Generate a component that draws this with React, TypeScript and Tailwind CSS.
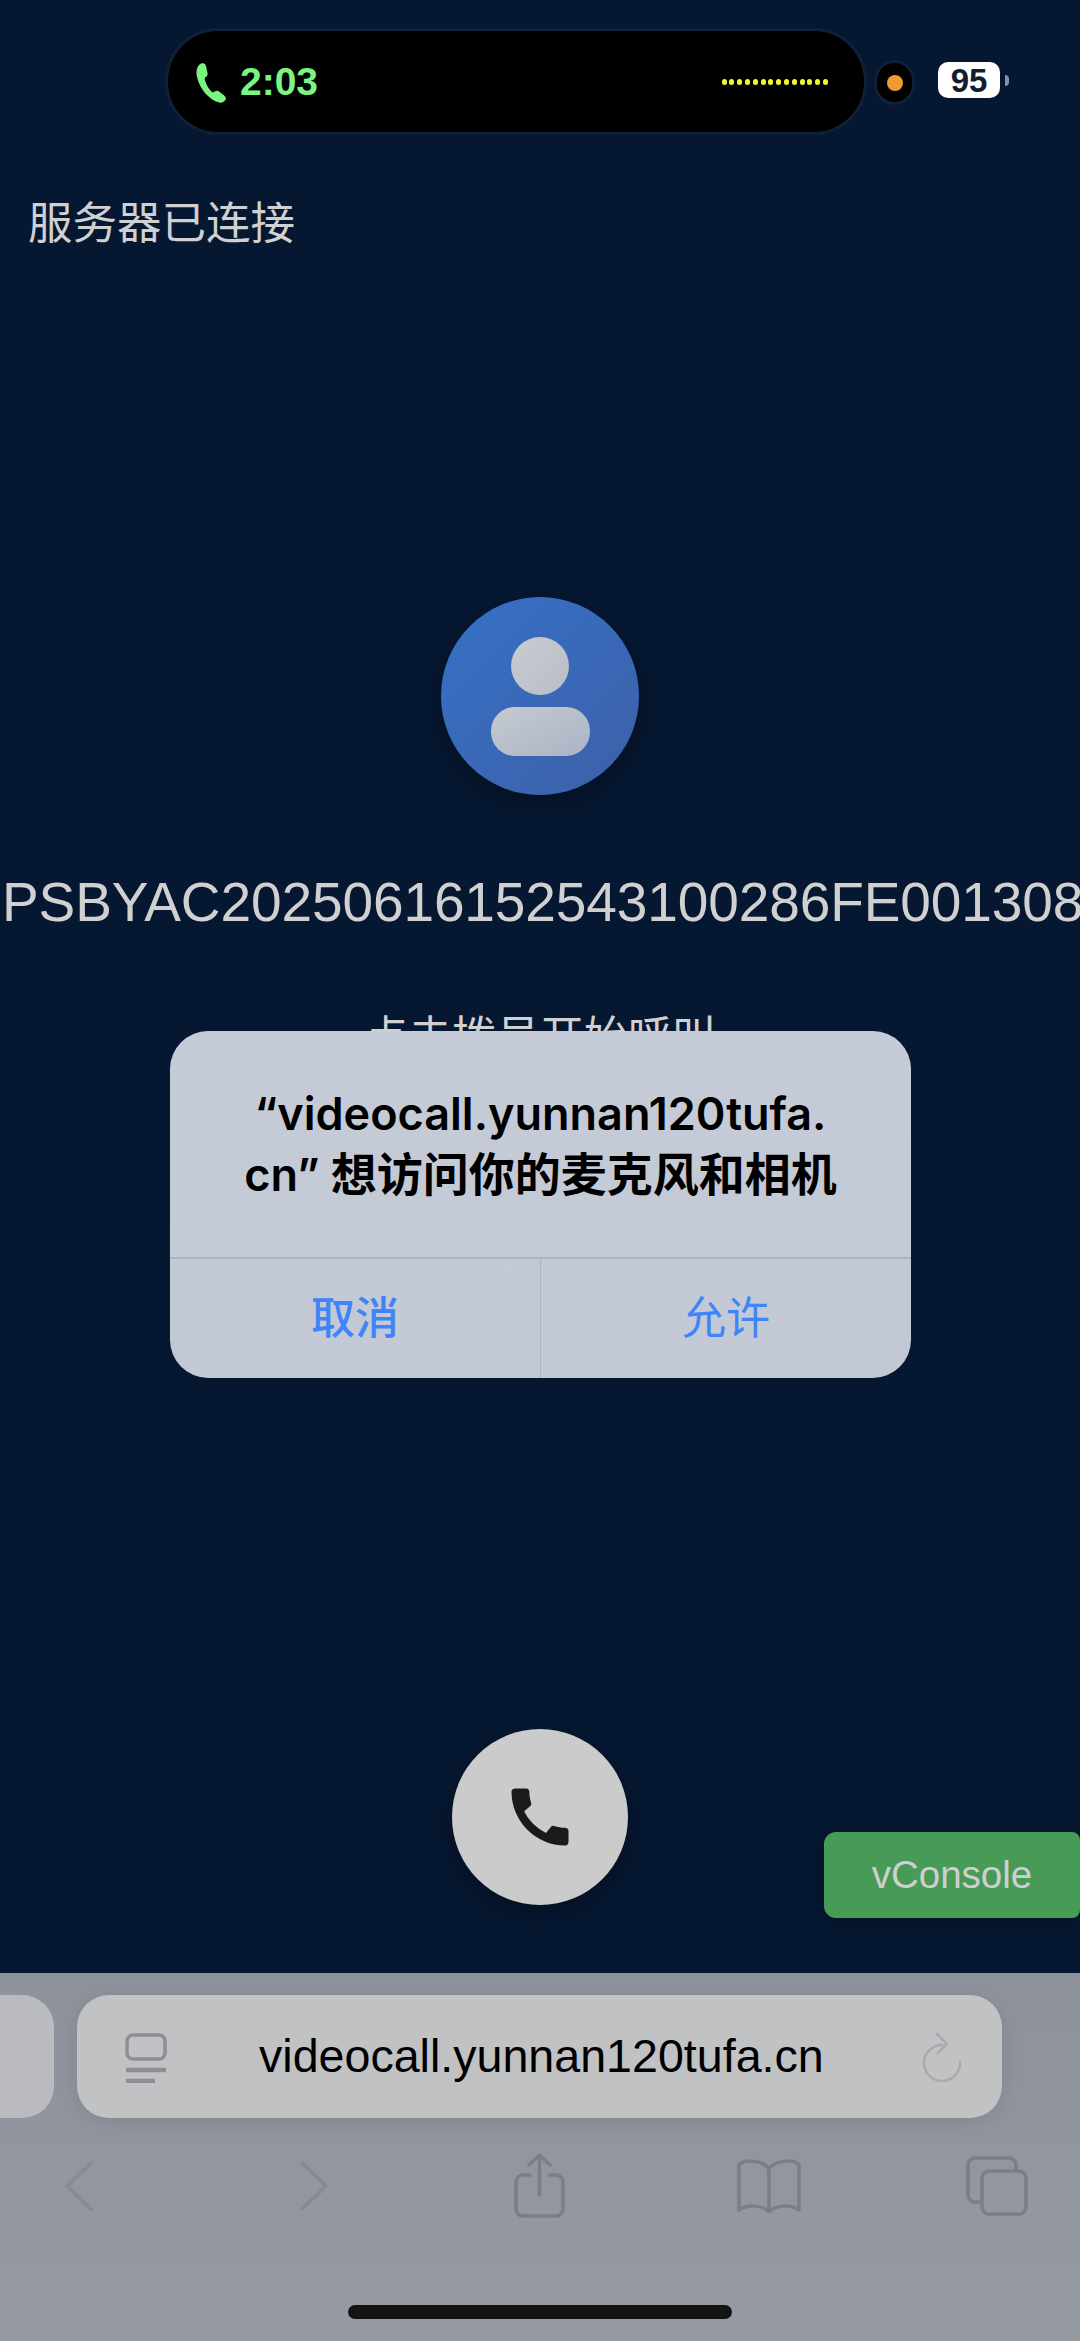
import React from 'react';

const CJK = "font-['Liberation_Sans','Noto_Sans_CJK_SC',sans-serif]";

const dots = Array.from({ length: 14 });

function StatusBar() {
  return (
    <div className="flex items-start pt-[31px] pl-[168px] h-[132px]">
      <div className="w-[696px] h-[101px] rounded-[50px] bg-black shadow-[0_0_0_3px_#0f2039] flex items-center pl-[28px] pr-[36px]">
        <svg width="31" height="40" viewBox="0 0 31 40" className="mt-[2px]">
          <path
            d="M5 0.600c2.500-1.200 4.500 0 5 2.500l1.500 7c0.300 1.800-0.300 3-1.800 4-1 0.800-1.200 1.500-0.800 3 1.200 4.500 3.500 8.500 6.500 11.500 1 1 1.800 1 2.800 0.200 1.500-1 3-1.500 4.500-0.500l5.500 4.200c1.800 1.500 2.200 3.200 1 4.800-1.500 2-3.500 3-6 2.300C13 36.500 4.500 27 1.300 15 -0.500 9.500 0.500 3 5 0.600z"
            fill="#7bf581"
          />
        </svg>
        <span className="ml-[13px] font-['Liberation_Sans',sans-serif] font-bold text-[39px] leading-none text-[#7bf581]">2:03</span>
        <div className="ml-auto flex gap-[2.800px]">
          {dots.map((_, i) => (
            <span key={i} className="w-[5px] h-[6px] rounded-full bg-[#f4f730]" />
          ))}
        </div>
      </div>
      <div className="ml-[13px] mt-[32px] w-[35px] h-[39px] rounded-full bg-black shadow-[0_0_0_3px_#0f2039] flex items-center justify-center">
        <span className="w-[16px] h-[16px] rounded-full bg-[#f09a36]" />
      </div>
      <div className="ml-[26px] mt-[31px] w-[62px] h-[36px] rounded-[10px] bg-white flex items-center justify-center font-['Liberation_Sans',sans-serif] font-bold text-[33px] leading-none text-[#141c33]">
        95
      </div>
      <span className="ml-[5px] mt-[44px] w-[4px] h-[11px] rounded-r-full bg-[#8a909c]" />
    </div>
  );
}

function Avatar() {
  return (
    <div className="mx-auto mt-[343px] w-[198px] h-[198px] rounded-full bg-linear-to-br from-[#3571c7] to-[#3c60a8] shadow-[0_8px_24px_rgba(0,0,0,0.3)] flex flex-col items-center pt-[40px]">
      <div className="w-[58px] h-[58px] rounded-full bg-linear-to-br from-[#c9cbce] to-[#b7bdc9]" />
      <div className="mt-[12px] w-[99px] h-[49px] rounded-[24px] bg-linear-to-br from-[#c6cacf] to-[#aab4c6]" />
    </div>
  );
}

function CallButton() {
  return (
    <div className="mx-auto mt-[663px] w-[176px] h-[176px] rounded-full bg-[#cbcbcb] shadow-[0_8px_24px_rgba(0,0,0,0.3)] flex items-center justify-center">
      <svg width="76" height="76" viewBox="0 0 24 24" fill="#1a1a1a">
        <path d="M20.010 15.380c-1.230 0-2.420-.2-3.530-.56-.35-.12-.74-.03-1.010.24l-1.570 1.970c-2.830-1.350-5.480-3.900-6.890-6.830l1.950-1.660c.27-.28.35-.67.24-1.020-.37-1.110-.56-2.300-.56-3.530 0-.54-.45-.99-.99-.99H4.190C3.650 3 3 3.240 3 3.990 3 13.280 10.730 21 20.010 21c.71 0 .99-.63.99-1.180v-3.450c0-.54-.45-.99-.99-.99z" />
      </svg>
    </div>
  );
}

function PermissionDialog() {
  return (
    <div className={`absolute left-[170px] top-[1031px] w-[741px] h-[347px] rounded-[38px] bg-linear-to-b from-[#c6ccd7] to-[#c2c8d4] flex flex-col ${CJK}`}>
      <div className="h-[228px] shrink-0 pt-[52px] text-center font-['Inter','Noto_Sans_CJK_SC',sans-serif] text-[45px] leading-[61px] font-semibold text-black border-b-2 border-[#aeb4c1]">
        “videocall.yunnan120tufa.
        <br />
        cn” <span className="text-[46px]">想访问你的麦克风和相机</span>
      </div>
      <div className="flex flex-1">
        <div className="w-[371px] flex items-center justify-center text-[44px] font-medium text-[#3f84f8] border-r border-[#aeb4c1]">取消</div>
        <div className="flex-1 flex items-center justify-center text-[44px] text-[#3f84f8]">允许</div>
      </div>
    </div>
  );
}

function SafariToolbar() {
  const grey = '#7b7e84';
  return (
    <div className="h-[368px] shrink-0 bg-linear-to-b from-[#8e929b] to-[#959aa2] pt-[22px] relative">
      <div className="flex">
        <div className="w-[54px] h-[123px] rounded-r-[32px] bg-[#b9bbbe]" />
        <div className="ml-[23px] w-[925px] h-[123px] rounded-[32px] bg-[#c0c2c4] shadow-[0_4px_24px_rgba(0,0,0,0.1)] flex items-center pl-[48px] pr-[40px]">
          <svg width="42" height="50" viewBox="0 0 42 50" fill="none" stroke="#8d8f93" className="mt-[3px]">
            <rect x="2" y="2" width="38" height="24" rx="6" strokeWidth="3.500" />
            <path d="M1 37h40M1 48h29" strokeWidth="4.500" />
          </svg>
          <span className="ml-[92px] font-['Liberation_Sans',sans-serif] text-[46.600px] leading-none text-black whitespace-nowrap">videocall.yunnan120tufa.cn</span>
          <svg width="40" height="50" viewBox="0 0 40 50" fill="none" stroke="#a8aaad" strokeWidth="2.500" strokeLinecap="round" strokeLinejoin="round" className="ml-auto">
            <path d="M20 13A18 18 0 1 0 38 30M15 2l10 10-9 9" />
          </svg>
        </div>
      </div>
      <div className="flex items-center h-[65px] mt-[35px] pl-[65px]">
        <svg width="28" height="50" viewBox="0 0 28 50" fill="none" stroke="#868a91" strokeWidth="3.500" strokeLinecap="round" strokeLinejoin="round">
          <path d="M26 2L2 25l24 23" />
        </svg>
        <svg width="28" height="50" viewBox="0 0 28 50" fill="none" stroke="#868a91" strokeWidth="3.500" strokeLinecap="round" strokeLinejoin="round" className="ml-[207px]">
          <path d="M2 2l24 23L2 48" />
        </svg>
        <svg width="51" height="65" viewBox="0 0 51 65" fill="none" stroke={grey} strokeWidth="3.500" strokeLinecap="round" strokeLinejoin="round" className="ml-[186px]">
          <path d="M16 22H9a7 7 0 0 0-7 7v27a7 7 0 0 0 7 7h33a7 7 0 0 0 7-7V29a7 7 0 0 0-7-7h-7" />
          <path d="M25.500 42V2M15 12L25.500 2 36 12" />
        </svg>
        <svg width="64" height="54" viewBox="0 0 64 54" fill="none" stroke={grey} strokeWidth="3.500" strokeLinejoin="round" className="ml-[172px]">
          <path d="M32 10C27 2 8 -1 2 6v45c8-6 24-5 30 2 6-7 22-8 30-2V6C56-1 37 2 32 10zM32 10v43" />
        </svg>
        <svg width="62" height="60" viewBox="0 0 62 60" fill="none" stroke={grey} strokeWidth="3.500" className="ml-[165px]">
          <path d="M15 46H9a7 7 0 0 1-7-7V9a7 7 0 0 1 7-7h34a7 7 0 0 1 7 7v5" />
          <rect x="16" y="15" width="44" height="43" rx="7" />
        </svg>
      </div>
      <div className="absolute left-[348px] top-[332px] w-[384px] h-[14px] rounded-full bg-[#141414]" />
    </div>
  );
}

export default function App() {
  return (
    <div className={`relative w-[1080px] h-[2341px] overflow-hidden bg-[#061731] flex flex-col ${CJK}`}>
      <div className="flex-1 min-h-0 flex flex-col text-[#d0d0d0]">
        <StatusBar />
        <p className="mt-[62px] pl-[28px] text-[44.500px] leading-[60px]">服务器已连接</p>
        <Avatar />
        <p className="mt-[75px] pl-[2px] text-[55px] leading-[64px] tracking-[-0.100px] whitespace-nowrap">PSBYAC20250616152543100286FE001308</p>
        <p className="mt-[76px] text-center text-[44px] leading-[56px]">点击拨号开始呼叫</p>
        <CallButton />
      </div>
      <SafariToolbar />
      <PermissionDialog />
      <div className="absolute right-0 top-[1832px] w-[256px] h-[86px] rounded-l-[12px] rounded-r-[8px] bg-[#489b57] shadow-[0_4px_16px_rgba(0,0,0,0.25)] flex items-center justify-center font-['Liberation_Sans',sans-serif] text-[38.500px] text-[#cfcfcf]">
        vConsole
      </div>
    </div>
  );
}
